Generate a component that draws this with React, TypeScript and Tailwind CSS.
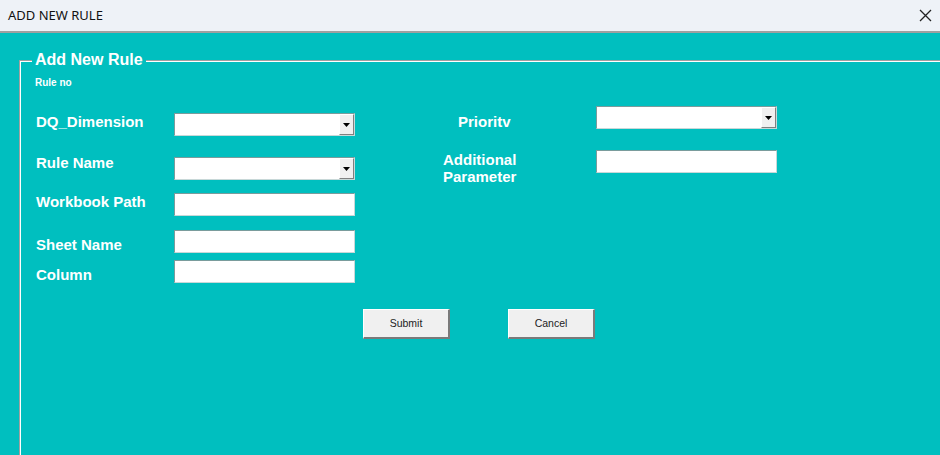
import React from "react";

const labelBase = "text-white font-bold text-[15px] whitespace-nowrap";
const labelCls = `${labelBase} leading-[18px]`;
const fontSans = { fontFamily: '"Liberation Sans", Arial, sans-serif' };

function TextBox() {
  return (
    <div className="w-[181px] h-[23px] bg-white border-t border-l border-[#7a9c9c] border-b border-r border-b-[#c8d8d8] border-r-[#c8d8d8]" />
  );
}

function Combo() {
  return (
    <div className="w-[181px] h-[23px] bg-white flex border-t border-l border-[#7a9c9c] border-b border-r border-b-[#c8d8d8] border-r-[#c8d8d8]">
      <div className="flex-1" />
      <div className="w-[15px] h-full bg-[#f0f0f0] border-t border-l border-white border-b border-r border-b-[#808080] border-r-[#808080] flex items-center justify-center">
        <svg width="7" height="4" viewBox="0 0 7 4">
          <path d="M0 0 H7 L3.5 4 Z" fill="#000" />
        </svg>
      </div>
    </div>
  );
}

function Btn({ children }: { children: React.ReactNode }) {
  return (
    <div className="w-[87px] h-[30px] bg-[#f0f0f0] border-t border-l border-white border-b-2 border-r-2 border-b-[#7a7a7a] border-r-[#7a7a7a] flex items-center justify-center text-[#222]">
      <span className="text-[10.5px]" style={fontSans}>{children}</span>
    </div>
  );
}

export default function App() {
  return (
    <div className="w-[940px] h-[455px] overflow-hidden flex flex-col bg-[#00bfbf]" style={fontSans}>
      {/* Title bar */}
      <div className="h-[31px] bg-[#eef2f7] flex items-center justify-between pl-[8px] pr-[8px] shrink-0">
        <span className="text-[13px] text-[#111]" style={{ fontFamily: '"Noto Sans", "Open Sans", sans-serif' }}>
          ADD NEW RULE
        </span>
        <svg width="13" height="13" viewBox="0 0 13 13">
          <path d="M1 1 L12 12 M12 1 L1 12" stroke="#222" strokeWidth="1.3" />
        </svg>
      </div>
      <div className="h-[2px] bg-[#a0a0a0] shrink-0" />
      {/* Body */}
      <div className="flex-1 pl-[19px] pt-[27px] flex">
        <div className="relative flex-1 border-t border-l border-[#a0a0a0]">
          <div className="h-full border-t border-l border-white flex flex-col">
            <div className="absolute top-[-11px] left-[12px] px-[3px] bg-[#00bfbf] text-white font-bold text-[16px] leading-[20px]">
              Add New Rule
            </div>
            <div className="mt-[15px] ml-[14px] text-white font-bold text-[10px] leading-[12px]">
              Rule no
            </div>
            <div className="mt-[18px] flex items-start">
              {/* Left column */}
              <div className="ml-[15px] mt-[6px] flex flex-col">
                <div className="flex items-start">
                  <div className={`${labelCls} w-[138px]`}>DQ_Dimension</div>
                  <Combo />
                </div>
                <div className="flex items-start mt-[21px]">
                  <div className={`${labelCls} w-[138px] mt-[-3px]`}>Rule Name</div>
                  <Combo />
                </div>
                <div className="flex items-start mt-[13px]">
                  <div className={`${labelCls} w-[138px]`}>Workbook Path</div>
                  <TextBox />
                </div>
                <div className="flex items-start mt-[14px]">
                  <div className={`${labelCls} w-[138px] mt-[6px]`}>Sheet Name</div>
                  <TextBox />
                </div>
                <div className="flex items-start mt-[6px]">
                  <div className={`${labelCls} w-[138px] mt-[6px]`}>Column</div>
                  <TextBox />
                </div>
              </div>
              {/* Right column */}
              <div className="ml-[88px] mt-[-1px] flex flex-col">
                <div className="flex items-start">
                  <div className={`${labelCls} w-[153px] pl-[15px] mt-[7px]`}>Prioritv</div>
                  <Combo />
                </div>
                <div className="flex items-start mt-[19px]">
                  <div className={`${labelBase} leading-[17px] w-[153px] mt-[1px]`}>
                    Additional
                    <br />
                    Parameter
                  </div>
                  <TextBox />
                </div>
              </div>
            </div>
            <div className="mt-[25px] ml-[342px] flex gap-[58px]">
              <Btn>Submit</Btn>
              <Btn>Cancel</Btn>
            </div>
          </div>
        </div>
      </div>
    </div>
  );
}
